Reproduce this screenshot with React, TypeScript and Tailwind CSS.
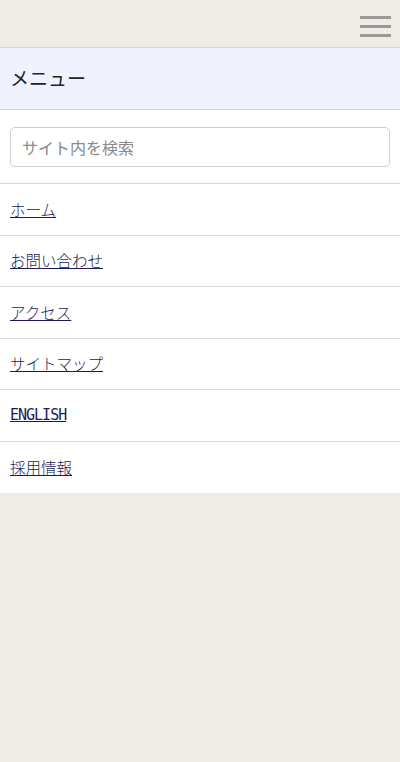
const links = ["ホーム", "お問い合わせ", "アクセス", "サイトマップ", "ENGLISH", "採用情報"];

export default function App() {
  return (
    <div className="min-h-[762px] w-full bg-[#efebe5] font-['Noto_Sans_CJK_JP',sans-serif]">
      {/* top bar */}
      <header className="flex h-[48px] items-start justify-end border-b border-[#d6d6d6] pr-[9px] pt-[16px]">
        <button className="flex w-[31px] flex-col gap-[6px]" aria-label="menu">
          <span className="block h-[3px] w-full bg-[#999]" />
          <span className="block h-[3px] w-full bg-[#999]" />
          <span className="block h-[3px] w-full bg-[#999]" />
        </button>
      </header>

      <nav className="bg-white">
        <div className="flex h-[62px] items-center border-b border-[#d6d6d6] bg-[#f0f3fe] px-[10px] text-[19px] text-[#222]">
          メニュー
        </div>

        <div className="border-b border-[#d6d6d6] px-[10px] pb-[16px] pt-[17px]">
          <input
            type="text"
            placeholder="サイト内を検索"
            className="h-[40px] w-full rounded-[5px] border border-[#cfcfcf] bg-white px-[11px] text-[16px] text-[#333] placeholder:text-[#8a8a8a] outline-none"
          />
        </div>

        <ul>
          {links.map((l, i) => (
            <li
              key={l}
              className={`flex h-[51.5px] items-center px-[10px] ${i < links.length - 1 ? "border-b border-[#d6d6d6]" : ""}`}
            >
              <a
                href="#"
                className={
                  l === "ENGLISH"
                    ? "font-['DejaVu_Sans_Mono',monospace] text-[15px] tracking-[-1px] text-[#1a1a58] underline"
                    : "text-[15.5px] font-light text-[#1a1a58] underline"
                }
              >
                {l}
              </a>
            </li>
          ))}
        </ul>
      </nav>
    </div>
  );
}
